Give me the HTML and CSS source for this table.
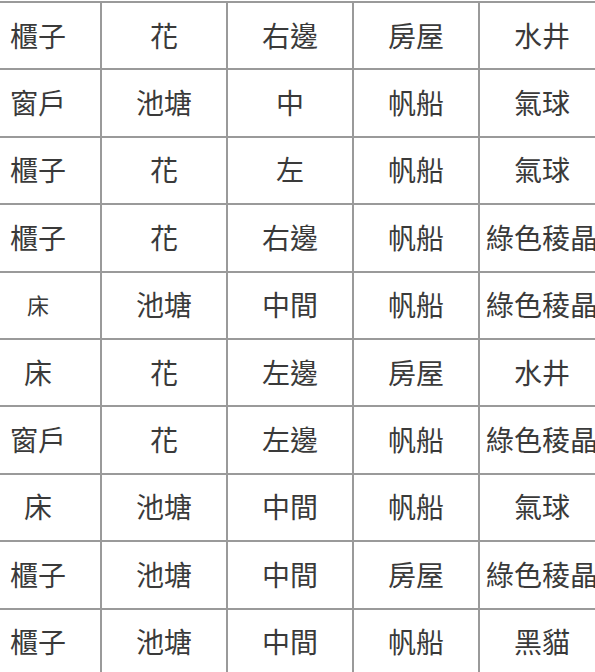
FILE: index.html
```html
<!DOCTYPE html>
<html lang="zh-Hant">
<head>
<meta charset="utf-8">
<link rel="stylesheet" href="styles.css">
</head>
<body>
<div class="viewport">
  <div class="grid">
    <div class="cell">櫃子</div><div class="cell">花</div><div class="cell">右邊</div><div class="cell">房屋</div><div class="cell">水井</div>
    <div class="cell">窗戶</div><div class="cell">池塘</div><div class="cell">中</div><div class="cell">帆船</div><div class="cell">氣球</div>
    <div class="cell">櫃子</div><div class="cell">花</div><div class="cell">左</div><div class="cell">帆船</div><div class="cell">氣球</div>
    <div class="cell">櫃子</div><div class="cell">花</div><div class="cell">右邊</div><div class="cell">帆船</div><div class="cell">綠色稜晶</div>
    <div class="cell small">床</div><div class="cell">池塘</div><div class="cell">中間</div><div class="cell">帆船</div><div class="cell">綠色稜晶</div>
    <div class="cell">床</div><div class="cell">花</div><div class="cell">左邊</div><div class="cell">房屋</div><div class="cell">水井</div>
    <div class="cell">窗戶</div><div class="cell">花</div><div class="cell">左邊</div><div class="cell">帆船</div><div class="cell">綠色稜晶</div>
    <div class="cell">床</div><div class="cell">池塘</div><div class="cell">中間</div><div class="cell">帆船</div><div class="cell">氣球</div>
    <div class="cell">櫃子</div><div class="cell">池塘</div><div class="cell">中間</div><div class="cell">房屋</div><div class="cell">綠色稜晶</div>
    <div class="cell">櫃子</div><div class="cell">池塘</div><div class="cell">中間</div><div class="cell">帆船</div><div class="cell">黑貓</div>
  </div>
</div>
</body>
</html>
```
FILE: styles.css
```css
html, body {
  margin: 0;
  padding: 0;
  background: #ffffff;
}
.viewport {
  width: 595px;
  height: 672px;
  overflow: hidden;
}
.grid {
  display: grid;
  grid-template-columns: repeat(5, 126px);
  grid-auto-rows: 67.4px;
  margin-left: -24px;
  margin-top: 1px;
  width: 630px;
}
.cell {
  box-sizing: border-box;
  border-top: 2px solid #9a9a9a;
  border-right: 2px solid #9a9a9a;
  display: flex;
  align-items: center;
  justify-content: center;
  padding-bottom: 2px;
  font-family: "Noto Sans CJK TC", "Noto Sans CJK SC", sans-serif;
  font-size: 28px;
  font-weight: 400;
  color: #3a3a3a;
  white-space: nowrap;
}
.cell.small {
  font-size: 22px;
}
```
